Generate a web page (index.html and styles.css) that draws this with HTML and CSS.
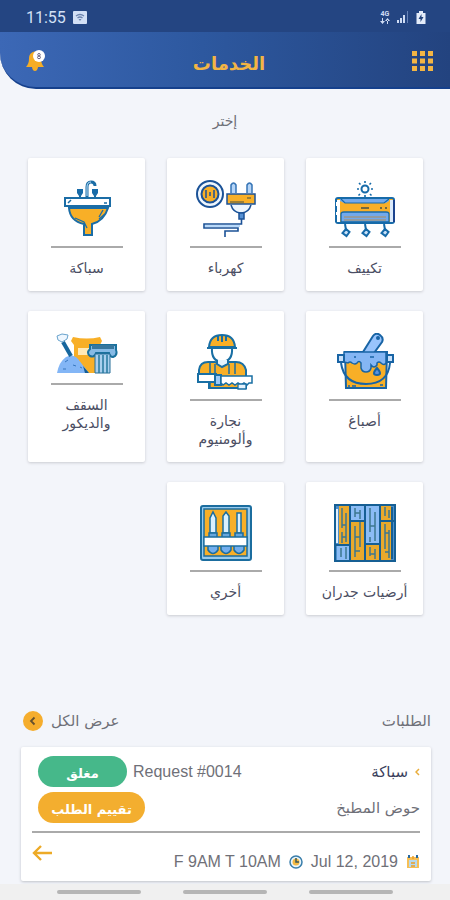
FILE: index.html
```html
<!DOCTYPE html>
<html lang="ar" dir="rtl">
<head>
<meta charset="utf-8">
<meta name="viewport" content="width=device-width, initial-scale=1">
<title>الخدمات</title>
<link rel="stylesheet" href="styles.css">
</head>
<body>
<div class="status" dir="ltr">
  <div class="status-side">
    <span class="clock">11:55</span>
    <svg width="14" height="13" viewBox="0 0 14 13"><rect width="14" height="13" rx="1" fill="#d3e0f6"/><path d="M3 5q4-3 8 0M4.500 7q2.500-2 5 0" fill="none" stroke="#6c84ae" stroke-width="1.300"/><path d="M5.500 8h3L7 10z" fill="#6c84ae"/></svg>
  </div>
  <div class="status-side">
    <span class="network">4G<svg width="10" height="6" viewBox="0 0 10 6"><path d="M0 3h5L2.500 6zM5 3h5L7.500 0zM2 0h1v4H2zM7 2h1v4H7z" fill="#cfdcf4"/></svg></span>
    <svg width="12" height="12" viewBox="0 0 12 12"><path d="M0 9h2v3H0zM3 7h2v5H3zM6 4h2v8H6z" fill="#cfdcf4"/><path d="M10 0h1v12h-1z" fill="#6884b8"/></svg>
    <svg width="10" height="13" viewBox="0 0 10 13"><path d="M3 0h4v2h2.500v11h-9V2H3z" fill="#e4ecfa"/><path d="M5.500 3L2.500 8h2v3l3-5h-2z" fill="#24447c"/></svg>
  </div>
</div>

<header class="topbar">
  <button class="icon-button" type="button" aria-label="القائمة">
    <svg width="21" height="20" viewBox="0 0 21 20" fill="#f3b544"><path d="M0 0h5v5H0zM8 0h5v5H8zM16 0h5v5h-5zM0 7.500h5v5H0zM8 7.500h5v5H8zM16 7.500h5v5h-5zM0 15h5v5H0zM8 15h5v5H8zM16 15h5v5h-5z"/></svg>
  </button>
  <h1>الخدمات</h1>
  <button class="icon-button" type="button" aria-label="الإشعارات">
    <svg width="20" height="22" viewBox="0 0 20 22"><path d="M9 1.500c-4 .5-6 3-6 7 0 4-1 6-3 8.500h18c-2-2.500-3-4.500-3-8.500 0-4-2-6.500-6-7zM6 17h6q-.5 4-3 4t-3-4z" fill="#f5ad25"/><circle cx="13" cy="6" r="6" fill="#fff"/><ellipse cx="13" cy="4.700" rx="1.300" ry="1.200" fill="none" stroke="#6c6580"/><ellipse cx="13" cy="7.400" rx="1.500" ry="1.300" fill="none" stroke="#6c6580"/></svg>
  </button>
</header>

<main>
  <h2 class="prompt">إختر</h2>
  <nav class="services">
    <a class="service" href="#ac">
      <svg width="62" height="58" viewBox="0 0 62 58" fill="none" stroke="#176ba9" stroke-width="2"><circle cx="31" cy="9" r="3.500"/><path d="M31 1v2M31 15v2M23 9h2M37 9h2M25 3l1.500 1.500M36 14l1.500 1.500M37 3l-1.500 1.500M26 14l-1.500 1.500" stroke-width="1.600"/><rect x="2" y="18" width="58" height="25" rx="2" fill="#f8af27"/><path d="M6 19h49v2l-3 2H10l-4-2z" fill="#72a9eb" stroke="none"/><path d="M7 19l4 4h39l5-4" stroke-width="1.200"/><path d="M2 20h4v22H2z" fill="#fff" stroke="none"/><path d="M2 19v3M2 26v6M2 35v7"/><path d="M56 20h3v22h-3z" fill="#dbeafb" stroke="none"/><path d="M60 20v22" stroke="#1b438e"/><path d="M7 42V34q0-2 3-2h42q3 0 3 2v8z" fill="#72a9eb" stroke-width="1.300"/><path d="M10 37h42M10 40h42" stroke="#929ba1"/><path d="M27 28h8M46 28h2M51 28h2" stroke="#72683f"/><path d="M11 44l1 6M31 44l1 6M50 44l1 6"/><path d="M12 49l3.500 3-3 4-4-3zM32 49l3.500 3-3 4-4-3zM51 49l3.500 3-3 4-4-3z" fill="#c9e0f7"/></svg>
      <span class="service-name">تكييف</span>
    </a>
    <a class="service" href="#electric">
      <svg width="62" height="58" viewBox="0 0 62 58" fill="none" stroke="#1b5297" stroke-width="2"><circle cx="15" cy="14" r="13" fill="#eef6fd"/><circle cx="15" cy="14" r="8.500" fill="#f8af27"/><path d="M11 10v8M15 12v4M19 10v8" stroke-width="1.500"/><path d="M36 13V5q2.500-4 5 0v8M52 13V5q2.500-4 5 0v8" fill="#b6d5f7" stroke="#3473b5" stroke-width="1.500"/><rect x="32" y="14" width="28" height="10" fill="#f8af27" stroke-width="1.500"/><path d="M35 22h14M52 18h4" stroke="#7c703c" stroke-width="1.500"/><path d="M36 25q2 7 9 8h2q7-1 9-8" fill="#edf6ff" stroke-width="1.500"/><path d="M44 33h5v6h-5z" fill="#5490d5" stroke-width="1.500"/><path d="M46.500 39v5H9v4h34v3H30v6" stroke-width="1.600"/><path d="M45 46H10" stroke="#b8d9fa"/></svg>
      <span class="service-name">كهرباء</span>
    </a>
    <a class="service" href="#plumbing">
      <svg width="62" height="58" viewBox="0 0 62 58" fill="none" stroke="#1b6da6" stroke-width="2"><path d="M13 28q1 13 15 16v11h8V44q12-3 16-16z" fill="#f8af27"/><path d="M19 38l9 4 3 6M43 39l6-5M47 30l-4 7" stroke-width="1.300"/><path d="M9 18h45v8H9z" fill="#fff"/><path d="M12 23l3-3M48 23h3" stroke-width="1.500"/><path d="M31 17V7q0-5 4-5t4 4" stroke-width="3"/><path d="M31 16V7q0-5 4-5" stroke="#c5e5fb" stroke-width="1"/><path d="M21 9h6v4l-2 3h-2l-2-3zM36 9h6v4l-2 3h-2l-2-3z" fill="#176ba9" stroke="none"/><path d="M24 14v4M39 14v4"/></svg>
      <span class="service-name">سباكة</span>
    </a>
    <a class="service" href="#painting">
      <svg width="62" height="58" viewBox="0 0 62 58" fill="none" stroke="#1864a5" stroke-width="2"><path d="M11 19h42l-1 36H12z" fill="#f8af27"/><path d="M29 19L39 3q3-4 7-1t2 7L40 20" fill="#99c4fc"/><circle cx="44" cy="5" r="1"/><path d="M10 19h42v11q-2 3-5 0-2-2-4 0v2q-3 4-6 0v3q-1 4-5 4t-5-4v-5q-2-3-4 0-2 2-5 0-2-2-4 0l-4-1z" fill="#85b6f4" stroke-width="1.500"/><path d="M4 22h6v7H4zM53 22h6v7h-6z" fill="#c8e0fa"/><path d="M7 30q3 21 25 21t24-21"/><path d="M43 35q-6 7 0 7t0-7z" fill="#5c93dd"/><path d="M14 53h2M18 53h4M46 52h3M20 24h2M36 24h4" stroke-width="1.300"/></svg>
      <span class="service-name">أصباغ</span>
    </a>
    <a class="service" href="#carpentry">
      <svg width="62" height="58" viewBox="0 0 62 58" fill="none" stroke="#196fa4" stroke-width="2"><path d="M17 15q-1 13 10 14 11-1 10-14" fill="#fff"/><path d="M14 14q1-12 13-12t13 12z" fill="#f8af27"/><path d="M12 15h30M23 3v5M27 2v7M31 3v5"/><path d="M4 46V37q1-8 9-8h7l7 4 7-4h7q8 0 10 8v18H14v-9z" fill="#f8af27"/><path d="M22 27v4l5 3 6-3v-4" fill="#e5f3fd"/><path d="M15 30v11M20 31v10M34 31v10M40 30v11M15 45v10M44 46v9" stroke-width="1.500"/><path d="M3 41h18v8H3z" fill="#fff"/><path d="M20 42h6v10h-6z" fill="#9bcaf9"/><path d="M26 43h31v7h-3l-2 2-3-2-3 2-3-2-3 2-3-2-3 2-3-2-3 2-2-2z" fill="#fff" stroke-width="1.500"/><path d="M43 51h8v5h-8z" fill="#e5f3fd" stroke-width="1.300"/></svg>
      <span class="service-name">نجارة<br>وألومنيوم</span>
    </a>
    <a class="service" href="#decor">
      <svg width="62" height="42" viewBox="0 0 62 42"><path d="M17 4q14 3 27 0l2 4-2 4v28H18V12l-3-4z" fill="#f8af27"/><path d="M22 15h12v7H22z" fill="#ffe9b7"/><path d="M1 40q2-11 9-16 7-4 12 2l11 14z" fill="#83b6f6"/><path d="M9 29l3-2M17 32l3 1M24 34l2 1M7 36h3" stroke="#3777bf"/><path d="M7 9l8 14" stroke="#16669d" stroke-width="4"/><path d="M1 3l5-2 6 1-1 4-5 3-4-2z" fill="#eff7ff" stroke="#69a3cd"/><path d="M34 12h26v5q2 5-3 7-3 0-4-4H40q-2 5-6 3-4-3 0-7z" fill="#86bae5" stroke="#1a719d" stroke-width="2"/><path d="M36 12h22v4H36z" fill="#37779d"/><path d="M39 21h15v19H39z" fill="#a9cfee" stroke="#266f98"/><path d="M43 22v18M47 22v18M51 22v18" stroke="#26799f" stroke-width="1.500"/><path d="M27 33l6 7h-4z" fill="#165d94"/></svg>
      <span class="service-name">السقف<br>والديكور</span>
    </a>
    <a class="service" href="#floors">
      <svg width="62" height="58" viewBox="0 0 62 58" fill="none"><path d="M1 1h60v56H1z" fill="#4c8fce"/><path d="M5 2h11v39H5zM17 18h13v38H17zM32 41h13v15H32zM47 2h10v14H47zM47 18h10v38H47z" fill="#e9a92c"/><path d="M17 2h13v14H17zM32 2h13v38H32zM3 42h12v14H3z" fill="#8bbcf5"/><path d="M1 1h60v56H1zM16 2v54M31 2v54M46 2v54M58 3v52M2 41h14M17 17h14M32 40h14M47 17h13" stroke="#165f94" stroke-width="2"/><path d="M8 4v20M12 9v29M8 28v11M21 4v9M26 6v9M21 22v31M26 18v25M36 4v24M41 8v29M36 33v5M36 43v9M41 45v10M51 3v9M55 6v8M51 20v25M55 26v28M7 44v9M12 43v12M8 21h4M8 33h4M21 9h5M21 33h5M21 47h5M36 22h5M36 50h5M51 29h4M51 48h4" stroke="#3d778f" stroke-width="1.500"/><path d="M3 5v34" stroke="#e4f0fc" stroke-width="2"/></svg>
      <span class="service-name">أرضيات جدران</span>
    </a>
    <a class="service" href="#other">
      <svg width="62" height="58" viewBox="0 0 62 58" fill="none" stroke="#1b6d9f" stroke-width="2"><rect x="6" y="2" width="50" height="54" rx="2" fill="#98cbed"/><rect x="9" y="5" width="43" height="47" fill="#f8af27" stroke-width="1.500"/><path d="M15 29V14l3-6 3 6v15zM28 29V12l3-4 3 4v17zM42 29V9h4v20z" fill="#d9f0ff" stroke-width="1.500"/><path d="M14 29h8v5h-8zM27 29h8v5h-8zM40 29h8v5h-8z" fill="#67a6dc" stroke-width="1.500"/><path d="M13 41h10v5q-5 7-10 0zM26 41h10v5q-5 7-10 0zM39 41h10v5q-5 7-10 0z" fill="#72aeee" stroke-width="1.500"/><path d="M9 33h43v9H9z" fill="#fff" stroke-width="1.300"/></svg>
      <span class="service-name">أخري</span>
    </a>
  </nav>

  <section class="requests">
    <div class="requests-head">
      <h2>الطلبات</h2>
      <a class="view-all" href="#all">عرض الكل
        <svg width="20" height="20" viewBox="0 0 20 20"><circle cx="10" cy="10" r="10" fill="#f5ad2d"/><path d="M11.500 6.500L8 10l3.500 3.500" fill="none" stroke="#65502d" stroke-width="1.800"/></svg>
      </a>
    </div>
    <article class="request">
      <div class="request-row">
        <h3><svg width="5" height="8" viewBox="0 0 5 8"><path d="M4 1L1 4l3 3" fill="none" stroke="#e9ad3b" stroke-width="1.500"/></svg>سباكة</h3>
        <div class="request-state">
          <span class="number" dir="ltr">Request #0014</span>
          <span class="pill closed">مغلق</span>
        </div>
      </div>
      <div class="request-row">
        <p class="item">حوض المطبخ</p>
        <button class="pill rate" type="button">تقييم الطلب</button>
      </div>
      <div class="request-foot">
        <div class="schedule">
          <svg width="14" height="14" viewBox="0 0 14 14"><path d="M1 2h12v11H1z" fill="#f7bf55"/><path d="M3 5h8v7H3z" fill="#b7d9ee"/><path d="M3 0v3M11 0v3" stroke="#28689f" stroke-width="2"/><path d="M7 1v3M5 8h4M5 11h4" stroke="#ed9f26" stroke-width="1.500"/></svg>
          <time datetime="2019-07-12" dir="ltr">Jul 12, 2019</time>
          <svg width="14" height="14" viewBox="0 0 14 14"><circle cx="7" cy="7" r="6" fill="#eaf5fb" stroke="#397eab" stroke-width="1.500"/><circle cx="7" cy="7" r="3.500" fill="#f4ba43"/><path d="M7 3v4h3" fill="none" stroke="#3d5a59" stroke-width="1.500"/></svg>
          <span dir="ltr">F 9AM T 10AM</span>
        </div>
        <a class="open" href="#request" aria-label="فتح الطلب"><svg width="20" height="16" viewBox="0 0 20 16"><path d="M20 8H2M9 1L2 8l7 7" fill="none" stroke="#edaa26" stroke-width="2.400"/></svg></a>
      </div>
    </article>
  </section>
</main>

<div class="system-nav"><span></span><span></span><span></span></div>
</body>
</html>
```
FILE: styles.css
```css
* {
  box-sizing: border-box;
}

body {
  margin: 0;
  min-height: 100vh;
  display: flex;
  flex-direction: column;
  background: #f3f5fa;
  color: #6f7078;
  font-family: "DejaVu Sans", sans-serif;
  font-size: 14px;
}

h1, h2, h3, p {
  margin: 0;
  font-weight: normal;
}

svg {
  display: block;
  flex: none;
}

a {
  color: inherit;
  text-decoration: none;
}

button {
  border: 0;
  font: inherit;
  cursor: pointer;
}

.status {
  display: flex;
  justify-content: space-between;
  height: 32px;
  padding: 2px 24px 0 26px;
  background: #244582;
}

.status-side {
  display: flex;
  align-items: center;
  gap: 7px;
}

.clock {
  color: #d3e0f6;
  font-family: Roboto, sans-serif;
  font-size: 16px;
}

.network {
  display: flex;
  flex-direction: column;
  align-items: center;
  color: #cfdcf4;
  font: bold 7px/7px Roboto, sans-serif;
}

.topbar {
  display: flex;
  align-items: center;
  justify-content: space-between;
  height: 57px;
  padding: 2px 17px 0 26px;
  background: linear-gradient(to right, #3c68b6, #2d589f 45%, #23437f);
  border-bottom: 2px solid #15408c;
  border-bottom-left-radius: 36px;
}

.topbar h1 {
  padding-top: 6px;
  color: #f3b544;
  font-size: 18px;
  font-weight: bold;
  line-height: 24px;
}

.icon-button {
  padding: 0;
  background: none;
}

main {
  flex: 1;
  display: flex;
  flex-direction: column;
}

.prompt {
  padding: 22px 0 26px;
  font-size: 14px;
  line-height: 21px;
  text-align: center;
}

.services {
  display: grid;
  grid-template-columns: repeat(3, 1fr);
  gap: 20px 22px;
  padding: 0 27px 0 28px;
}

.service {
  display: flex;
  flex-direction: column;
  align-items: center;
  padding: 22px 12px 14px;
  background: #fff;
  border-radius: 2px;
  box-shadow: 0 1px 3px #c9cbd1;
  color: #4b4e63;
  line-height: 18px;
  text-align: center;
}

.service-name {
  margin-top: 8px;
}

.service-name::before {
  content: "";
  display: block;
  width: 72px;
  margin: 0 auto 11px;
  border-top: 2px solid #aaa;
}

.requests {
  margin-top: auto;
  padding: 0 19px 3px 21px;
}

.requests-head {
  display: flex;
  align-items: center;
  justify-content: space-between;
  padding: 0 0 15px 2px;
}

.requests-head h2,
.view-all {
  font-size: 15px;
  line-height: 22px;
}

.view-all {
  display: flex;
  align-items: center;
  gap: 8px;
}

.request {
  padding: 9px 11px 8px;
  background: #fff;
  border-radius: 2px;
  box-shadow: 0 1px 3px #bfc2c8;
}

.request-row {
  display: flex;
  align-items: center;
  justify-content: space-between;
  margin-bottom: 5px;
  padding-left: 6px;
}

.request h3 {
  display: flex;
  align-items: center;
  gap: 7px;
  color: #3b3f5c;
  font-size: 15px;
}

.request-state {
  display: flex;
  align-items: center;
  gap: 6px;
}

.number,
.schedule {
  font-family: "Liberation Sans", sans-serif;
  font-size: 16px;
}

.item {
  font-size: 15px;
}

.pill {
  height: 31px;
  padding: 4px 13px 0;
  border-radius: 16px;
  color: #fff;
  font-size: 13px;
  font-weight: bold;
  line-height: 27px;
  text-align: center;
}

.closed {
  min-width: 89px;
  background: #46b88a;
}

.rate {
  min-width: 107px;
  background: #f3ae2f;
}

.request-foot {
  display: flex;
  align-items: flex-start;
  justify-content: space-between;
  margin-top: 8px;
  padding-top: 12px;
  border-top: 2px solid #aaa;
}

.schedule {
  display: flex;
  align-items: center;
  gap: 8px;
  padding-top: 6px;
  line-height: 22px;
}

.system-nav {
  display: flex;
  justify-content: center;
  gap: 42px;
  padding: 6px;
  background: #f0f0f0;
}

.system-nav span {
  width: 84px;
  height: 4px;
  border-radius: 2px;
  background: #b5b5b5;
}
```
